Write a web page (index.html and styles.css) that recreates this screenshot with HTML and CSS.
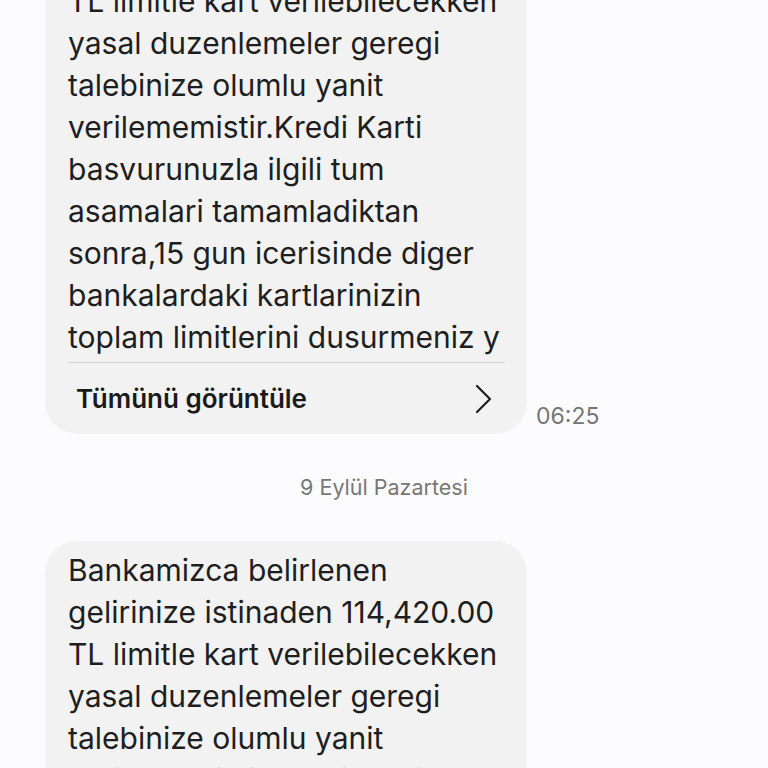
FILE: index.html
```html
<!DOCTYPE html>
<html>
    <head>
    <meta charset="utf-8">
    <link rel="stylesheet" href="styles.css">
    </head>
    <body>
        <div class="thread">

            <div class="row first">
                <div class="bubble">
                    <p class="text">TL limitle kart verilebilecekken<br>yasal duzenlemeler geregi<br>talebinize olumlu yanit<br>verilememistir.Kredi Karti<br>basvurunuzla ilgili tum<br>asamalari tamamladiktan<br>sonra,15 gun icerisinde diger<br>bankalardaki kartlarinizin<br>toplam limitlerini dusurmeniz y</p>
                    <div class="more">
                        <span>Tümünü görüntüle</span>
                        <svg width="20" height="30" viewBox="0 0 20 30"><path d="M4 2 L17 15 L4 28" fill="none" stroke="#1e1e1e" stroke-width="2.2" stroke-linecap="round" stroke-linejoin="round"/></svg>
                    </div>
                </div>
                <span class="time">06:25</span>
            </div>

            <div class="date">9 Eylül Pazartesi</div>

            <div class="row">
                <div class="bubble">
                    <p class="text">Bankamizca belirlenen<br>gelirinize istinaden 114,420.00<br>TL limitle kart verilebilecekken<br>yasal duzenlemeler geregi<br>talebinize olumlu yanit<br>verilememistir.Kredi Karti</p>
                </div>
            </div>

        </div>
    </body>
</html>
```

FILE: styles.css
```css
html, body {
    margin: 0;
    height: 100%;
    overflow: hidden;
    background-color: #fcfcfe;
}

body {
    font-family: Inter, Roboto, sans-serif;
    color: #1e1e1e;
}

.thread {
    padding-left: 45px;
}

.row {
    display: flex;
    align-items: flex-end;
    gap: 9px;
}

.row.first {
    margin-top: -28px;
}

.bubble {
    width: 482px;
    box-sizing: border-box;
    background-color: #f2f2f2;
    border-radius: 32px;
    padding: 8px 22px 0 23px;
}

.text {
    margin: 0;
    font-size: 30px;
    line-height: 42px;
    white-space: nowrap;
}

.more {
    display: flex;
    align-items: center;
    justify-content: space-between;
    border-top: 1px solid #d3d3d3;
    margin-top: 4px;
    height: 71px;
    padding: 0 12px 0 8px;
}

.more span {
    font-size: 26px;
    font-weight: 600;
    color: #1a1a1a;
}

.time {
    font-size: 23px;
    color: #767676;
    padding-bottom: 4px;
}

.date {
    text-align: center;
    font-size: 21.5px;
    color: #777777;
    margin: 41px 0 41px -45px;
    line-height: 25px;
}
```
